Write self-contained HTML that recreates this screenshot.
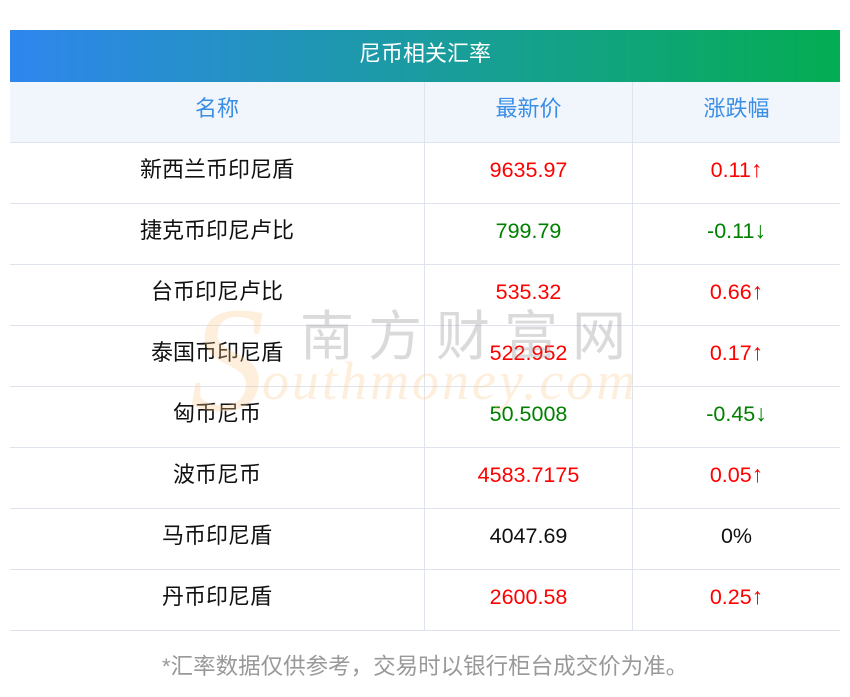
<!DOCTYPE html>
<html><head><meta charset="utf-8"><style>
body{margin:0;width:850px;height:697px;background:#fff;font-family:"Liberation Sans","Noto Sans CJK SC",sans-serif;position:relative;overflow:hidden}
.title{position:absolute;left:10px;top:30px;width:830px;height:52px;background:linear-gradient(90deg,#2f86ee,#16a090 60%,#04ad52);color:#fff;font-size:22px;text-align:center;line-height:48px}
.row{position:absolute;left:10px;width:830px;height:60px;border-bottom:1px solid #dfe3ee;display:flex}
.row div{height:60px;line-height:54px;text-align:center;font-size:22px;overflow:hidden;white-space:nowrap}
.c1{width:414px;border-right:1px solid #dfe3ee}
.c2{width:207px;border-right:1px solid #dfe3ee}
.c3{width:207px}
.hd{background:#f1f6fd;color:#3a8ee6}
.row .n{font-size:21.5px}
.r{color:#f00}.g{color:#008000}.k{color:#111}
.a{font-size:23px;display:inline-block;line-height:20px}
.foot{position:absolute;left:0;width:850px;top:652px;text-align:center;color:#999;font-size:22.5px;line-height:30px}
.wm1{position:absolute;left:300px;top:292px;font-size:54px;color:rgba(150,150,150,.35);letter-spacing:14px;font-family:"Noto Sans CJK SC",sans-serif}
.wm2{position:absolute;left:262px;top:350px;font-size:54px;color:rgba(252,200,140,.3);font-style:italic;font-family:"Liberation Serif",serif;letter-spacing:3px}
.wmS{position:absolute;left:190px;top:285px;font-size:150px;color:rgba(252,200,140,.3);font-style:italic;font-family:"Liberation Serif",serif;line-height:1}
</style></head><body>
<div class="title">尼币相关汇率</div>
<div class="row hd" style="top:82px"><div class="c1">名称</div><div class="c2">最新价</div><div class="c3">涨跌幅</div></div>
<div class="row" style="top:143px"><div class="c1 k">新西兰币印尼盾</div><div class="c2 r n">9635.97</div><div class="c3 r n">0.11<span class="a">↑</span></div></div>
<div class="row" style="top:204px"><div class="c1 k">捷克币印尼卢比</div><div class="c2 g n">799.79</div><div class="c3 g n">-0.11<span class="a">↓</span></div></div>
<div class="row" style="top:265px"><div class="c1 k">台币印尼卢比</div><div class="c2 r n">535.32</div><div class="c3 r n">0.66<span class="a">↑</span></div></div>
<div class="row" style="top:326px"><div class="c1 k">泰国币印尼盾</div><div class="c2 r n">522.952</div><div class="c3 r n">0.17<span class="a">↑</span></div></div>
<div class="row" style="top:387px"><div class="c1 k">匈币尼币</div><div class="c2 g n">50.5008</div><div class="c3 g n">-0.45<span class="a">↓</span></div></div>
<div class="row" style="top:448px"><div class="c1 k">波币尼币</div><div class="c2 r n">4583.7175</div><div class="c3 r n">0.05<span class="a">↑</span></div></div>
<div class="row" style="top:509px"><div class="c1 k">马币印尼盾</div><div class="c2 k n">4047.69</div><div class="c3 k n">0%</div></div>
<div class="row" style="top:570px"><div class="c1 k">丹币印尼盾</div><div class="c2 r n">2600.58</div><div class="c3 r n">0.25<span class="a">↑</span></div></div>
<div class="wmS">S</div>
<div class="wm1">南方财富网</div>
<div class="wm2">outhmoney.com</div>
<div class="foot">*汇率数据仅供参考，交易时以银行柜台成交价为准。</div>
</body></html>
